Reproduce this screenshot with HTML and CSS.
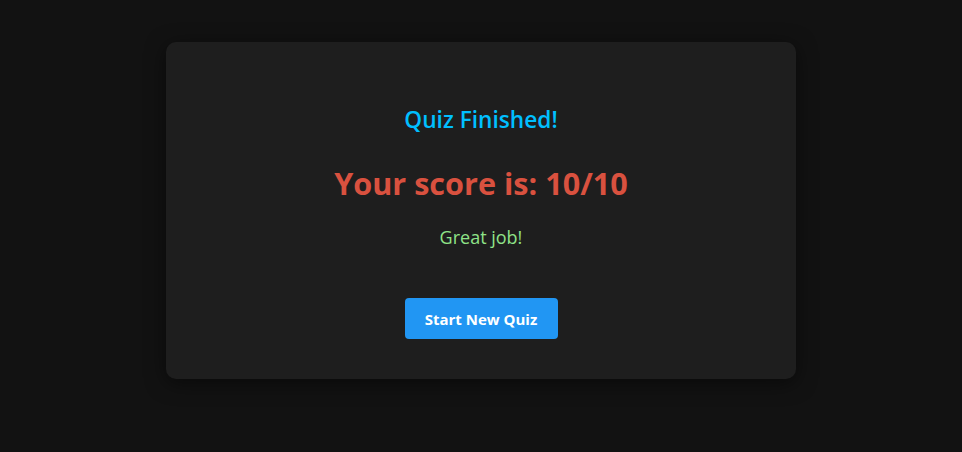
FILE: index.html
```html
<!DOCTYPE html>
<html lang="en">
<head>
<meta charset="utf-8">
<title>Quiz Finished</title>
<link rel="stylesheet" href="styles.css">
</head>
<body>
<main class="card">
  <h2 class="title">Quiz Finished!</h2>
  <p class="score">Your score is: 10/10</p>
  <p class="feedback">Great job!</p>
  <button class="btn">Start New Quiz</button>
</main>
</body>
</html>
```

FILE: styles.css
```css
html, body {
  margin: 0;
  padding: 0;
  background: #121212;
  height: 100%;
}
body {
  font-family: "Open Sans", "Noto Sans", sans-serif;
  padding-top: 42px;
  box-sizing: border-box;
}
.card {
  width: 630px;
  box-sizing: border-box;
  margin: 0 auto;
  background: #1e1e1e;
  border-radius: 10px;
  box-shadow: 0 4px 20px rgba(0, 0, 0, 0.5);
  padding: 62px 40px 40px;
  display: flex;
  flex-direction: column;
  align-items: center;
  text-align: center;
}
.title {
  margin: 0;
  font-size: 22.7px;
  line-height: 32px;
  font-weight: 600;
  color: #00bfff;
}
.score {
  margin: 27px 0 0;
  font-size: 30.6px;
  line-height: 40px;
  font-weight: 700;
  color: #d9513f;
}
.feedback {
  margin: 22px 0 0;
  font-size: 18px;
  line-height: 24px;
  color: #8fe388;
}
.btn {
  margin-top: 49px;
  width: 153px;
  height: 41px;
  border: none;
  border-radius: 4px;
  background: #2196f3;
  color: #ffffff;
  font-family: inherit;
  font-size: 15px;
  font-weight: 700;
  cursor: pointer;
}
```
